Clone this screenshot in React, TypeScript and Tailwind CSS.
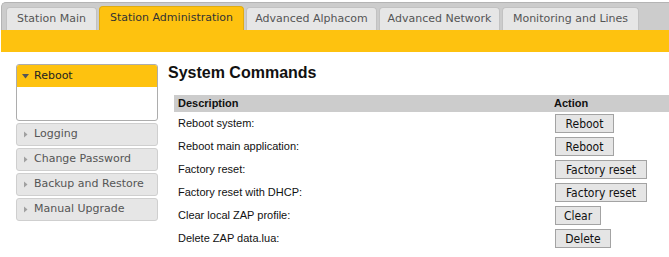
import React from 'react';

const tabs = [
  { label: 'Station Main', w: 'w-[91px]' },
  { label: 'Station Administration', w: 'w-[145px]', active: true },
  { label: 'Advanced Alphacom', w: 'w-[131px]' },
  { label: 'Advanced Network', w: 'w-[121px]' },
  { label: 'Monitoring and Lines', w: 'w-[137px]' },
];

const menu = ['Logging', 'Change Password', 'Backup and Restore', 'Manual Upgrade'];

const commands = [
  { desc: 'Reboot system:', action: 'Reboot', w: 'w-[59px]' },
  { desc: 'Reboot main application:', action: 'Reboot', w: 'w-[59px]' },
  { desc: 'Factory reset:', action: 'Factory reset', w: 'w-[92px]' },
  { desc: 'Factory reset with DHCP:', action: 'Factory reset', w: 'w-[92px]' },
  { desc: 'Clear local ZAP profile:', action: 'Clear', w: 'w-[46px]' },
  { desc: 'Delete ZAP data.lua:', action: 'Delete', w: 'w-[56px]' },
];

export default function App() {
  return (
    <div className="w-[669px] h-[257px] overflow-hidden bg-white font-['DejaVu_Sans',Verdana,sans-serif]">
      {/* tab strip */}
      <div className="ml-[1px] mt-[2px] h-[28px] flex items-end gap-[2px] pl-[4px] bg-[#cccccc] border-t border-l border-[#b4b4b4] rounded-tl-[5px]">
        {tabs.map(t =>
          t.active ? (
            <div
              key={t.label}
              className={`${t.w} h-[24px] flex items-center justify-center rounded-t-[4px] bg-[#fec20f] border border-b-0 border-[#e0ac10] text-[11px] text-[#333]`}
            >
              {t.label}
            </div>
          ) : (
            <div
              key={t.label}
              className={`${t.w} h-[23px] flex items-center justify-center rounded-t-[4px] bg-[#e6e6e6] border border-b-0 border-[#c2c2c2] text-[11px] text-[#555]`}
            >
              {t.label}
            </div>
          )
        )}
      </div>
      <div className="ml-[1px] h-[22px] bg-[#fec20f]" />

      <div className="flex pt-[12px] pl-[16px] gap-[10px]">
        {/* left menu */}
        <div className="w-[142px] shrink-0">
          <div className="h-[57px] border border-[#adadad] rounded-[3px] overflow-hidden">
            <div className="h-[22px] bg-[#fec20f] flex items-center pl-[5px] text-[11px] text-[#222]">
              <svg width="7" height="5" viewBox="0 0 7 5" className="mr-[5px]">
                <path d="M0 0 H7 L3.5 4.5 Z" fill="#555" />
              </svg>
              Reboot
            </div>
          </div>
          {menu.map(m => (
            <div
              key={m}
              className="mt-[2px] h-[23px] flex items-center pl-[5px] bg-[#e6e6e6] border border-[#cfcfcf] rounded-[3px] text-[11px] text-[#555]"
            >
              <svg width="7" height="7" viewBox="0 0 7 7" className="mr-[5px]">
                <path d="M2 0.5 L5.5 3.5 L2 6.5 Z" fill="#a0a0a0" />
              </svg>
              {m}
            </div>
          ))}
        </div>

        {/* content */}
        <div className="flex-1 font-['Liberation_Sans',Arial,sans-serif]">
          <h1 className="text-[16px] leading-[18px] font-bold text-[#111]">System Commands</h1>
          <div className="ml-[6px] mt-[13px] w-[520px] text-[11px] text-[#111]">
            <div className="h-[17px] flex items-center bg-[#cccccc] font-bold">
              <div className="w-[376px] pl-[4px]">Description</div>
              <div className="pl-[4px]">Action</div>
            </div>
            {commands.map(c => (
              <div key={c.desc} className="h-[23px] flex items-center">
                <div className="w-[376px] pl-[4px]">{c.desc}</div>
                <div className="pl-[5px]">
                  <div
                    className={`${c.w} h-[19px] flex items-center justify-center bg-[#e5e5e5] border border-[#a3a3a3] text-[12px] text-[#111] font-['DejaVu_Sans_Condensed','DejaVu_Sans',sans-serif]`}
                  >
                    {c.action}
                  </div>
                </div>
              </div>
            ))}
          </div>
        </div>
      </div>
    </div>
  );
}
